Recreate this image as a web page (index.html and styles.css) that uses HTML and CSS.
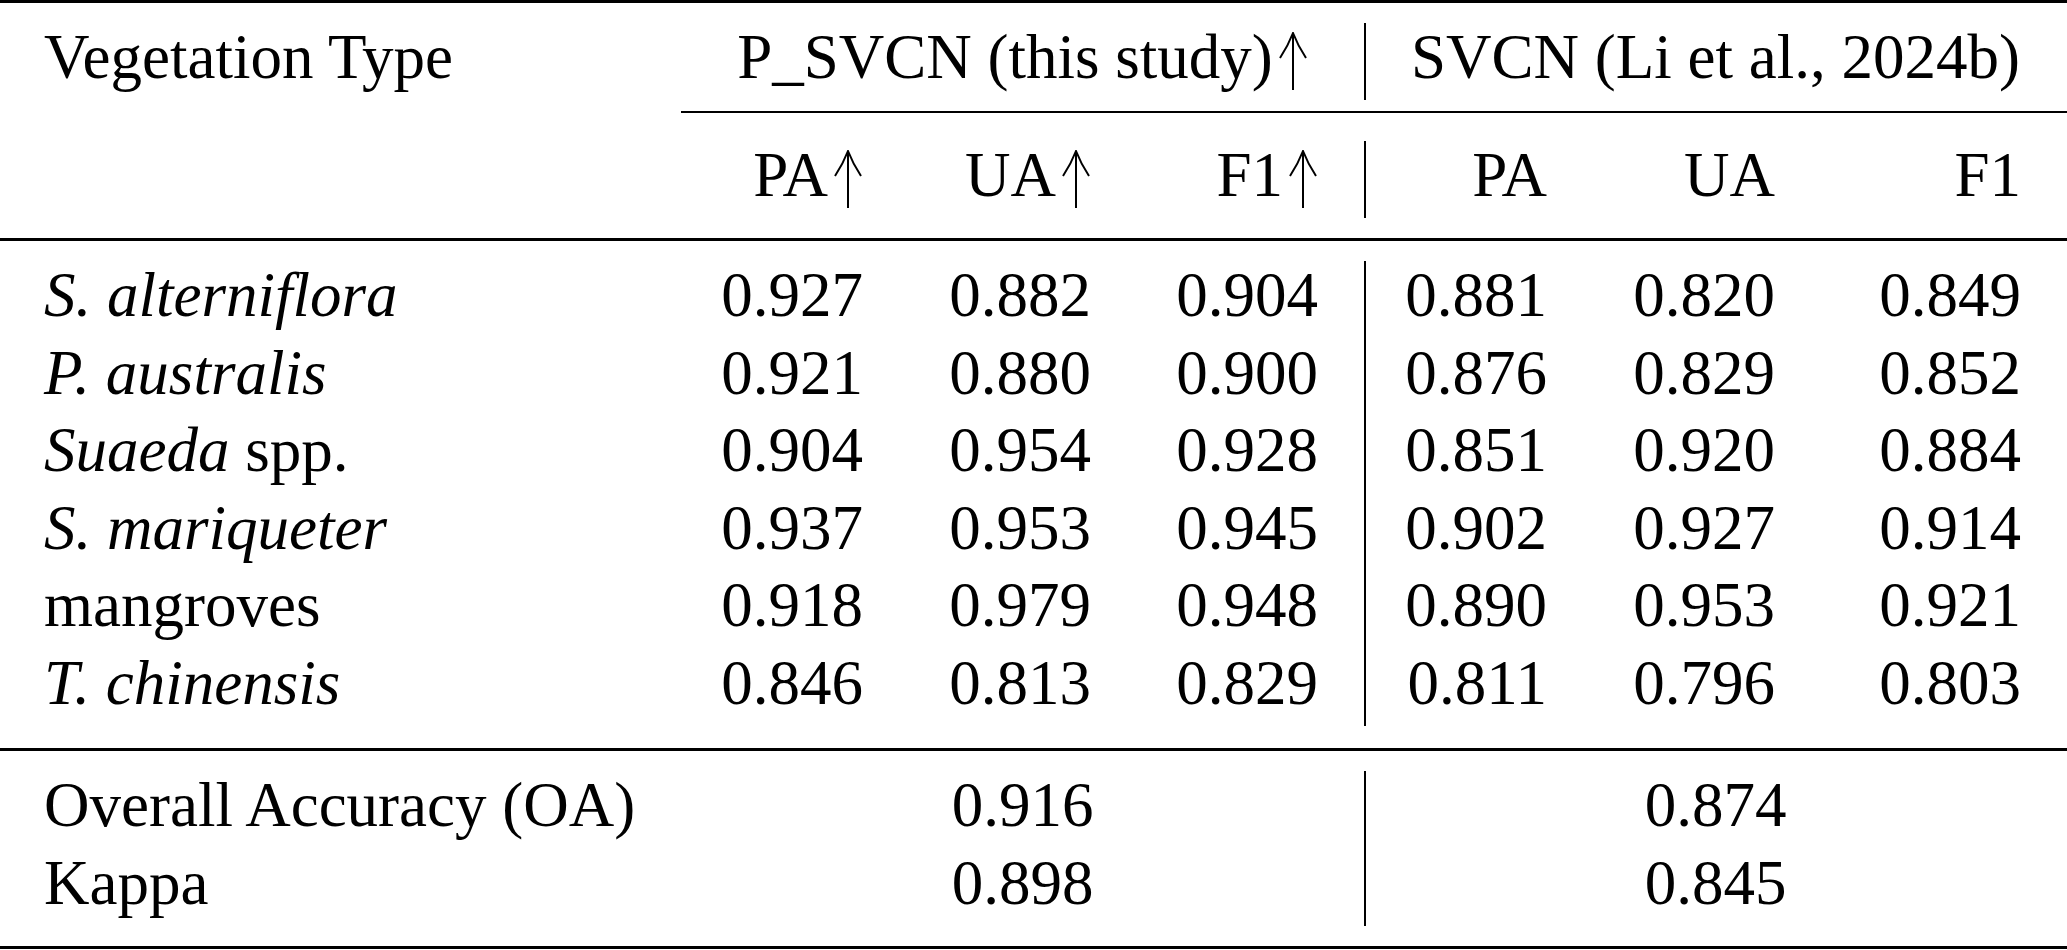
FILE: index.html
```html
<!DOCTYPE html>
<html lang="en">
<head>
<meta charset="utf-8">
<title>Accuracy comparison table</title>
<link rel="stylesheet" href="styles.css">
</head>
<body>
<div class="tbl">
  <div class="rule heavy"></div>

  <div class="grid head head-1">
    <div class="c first">Vegetation Type</div>
    <div class="c g1">P_SVCN (this study)<svg class="arr" viewBox="0 0 30 58"><path d="M15 3V58"/><path d="M2 26Q10 14 15 1Q20 14 28 26"/></svg></div>
    <div class="c g2 v">SVCN (Li et al., 2024b)</div>
  </div>

  <div class="cmid"></div>

  <div class="grid head head-2">
    <div class="c first"></div>
    <div class="c num">PA<svg class="arr" viewBox="0 0 30 58"><path d="M15 3V58"/><path d="M2 26Q10 14 15 1Q20 14 28 26"/></svg></div>
    <div class="c num">UA<svg class="arr" viewBox="0 0 30 58"><path d="M15 3V58"/><path d="M2 26Q10 14 15 1Q20 14 28 26"/></svg></div>
    <div class="c num">F1<svg class="arr" viewBox="0 0 30 58"><path d="M15 3V58"/><path d="M2 26Q10 14 15 1Q20 14 28 26"/></svg></div>
    <div class="c num v">PA</div>
    <div class="c num">UA</div>
    <div class="c num">F1</div>
  </div>

  <div class="rule mid"></div>

  <div class="grid body">
    <div class="c first"><i>S. alterniflora</i></div>
    <div class="c num">0.927</div><div class="c num">0.882</div><div class="c num">0.904</div>
    <div class="c num v">0.881</div><div class="c num">0.820</div><div class="c num">0.849</div>

    <div class="c first"><i>P. australis</i></div>
    <div class="c num">0.921</div><div class="c num">0.880</div><div class="c num">0.900</div>
    <div class="c num v">0.876</div><div class="c num">0.829</div><div class="c num">0.852</div>

    <div class="c first"><i>Suaeda</i> spp.</div>
    <div class="c num">0.904</div><div class="c num">0.954</div><div class="c num">0.928</div>
    <div class="c num v">0.851</div><div class="c num">0.920</div><div class="c num">0.884</div>

    <div class="c first"><i>S. mariqueter</i></div>
    <div class="c num">0.937</div><div class="c num">0.953</div><div class="c num">0.945</div>
    <div class="c num v">0.902</div><div class="c num">0.927</div><div class="c num">0.914</div>

    <div class="c first">mangroves</div>
    <div class="c num">0.918</div><div class="c num">0.979</div><div class="c num">0.948</div>
    <div class="c num v">0.890</div><div class="c num">0.953</div><div class="c num">0.921</div>

    <div class="c first"><i>T. chinensis</i></div>
    <div class="c num">0.846</div><div class="c num">0.813</div><div class="c num">0.829</div>
    <div class="c num v">0.811</div><div class="c num">0.796</div><div class="c num">0.803</div>
  </div>

  <div class="rule mid lower"></div>

  <div class="grid foot">
    <div class="c first">Overall Accuracy (OA)</div>
    <div class="c g1">0.916</div>
    <div class="c g2 v">0.874</div>

    <div class="c first">Kappa</div>
    <div class="c g1">0.898</div>
    <div class="c g2 v">0.845</div>
  </div>

  <div class="rule heavy bottom"></div>
</div>
</body>
</html>
```

FILE: styles.css
```css
html, body {
  margin: 0;
  padding: 0;
  background: #ffffff;
}

body {
  font-family: "Liberation Serif", "Times New Roman", serif;
  font-size: 63px;
  color: #000000;
}

.tbl {
  width: 2067px;
  display: flex;
  flex-direction: column;
}

.rule {
  background: #000000;
  width: 100%;
}

.rule.heavy {
  height: 3px;
}

.rule.mid {
  height: 3px;
  margin-top: 20px;
}

.rule.mid.lower {
  margin-top: 22px;
}

.rule.bottom {
  margin-top: 20px;
}

.cmid {
  height: 2px;
  background: #000000;
  margin-left: 681px;
  margin-top: 11px;
}

.grid {
  display: grid;
  grid-template-columns: 681px 228px 228px 227px 229px 228px 246px;
}

.head {
  grid-auto-rows: 77px;
}

.head-1 {
  margin-top: 20px;
}

.head-2 {
  margin-top: 28px;
}

.body {
  grid-auto-rows: 77.5px;
  margin-top: 20px;
}

.foot {
  grid-auto-rows: 77.5px;
  margin-top: 20px;
}

.c {
  line-height: 68px;
  white-space: nowrap;
}

.first {
  padding-left: 44px;
  text-align: left;
}

.num {
  text-align: right;
  padding-right: 46px;
}

.g1 {
  grid-column: 2 / 5;
  text-align: center;
}

.g2 {
  grid-column: 5 / 8;
  text-align: center;
}

.v {
  border-left: 2px solid #000000;
}

.g2.v {
  padding-right: 2px;
}

.arr {
  width: 30px;
  height: 58px;
  vertical-align: -12px;
  margin-left: 5px;
  fill: none;
  stroke: #000000;
  stroke-width: 2;
  stroke-linecap: butt;
}

i {
  font-style: italic;
}
```
